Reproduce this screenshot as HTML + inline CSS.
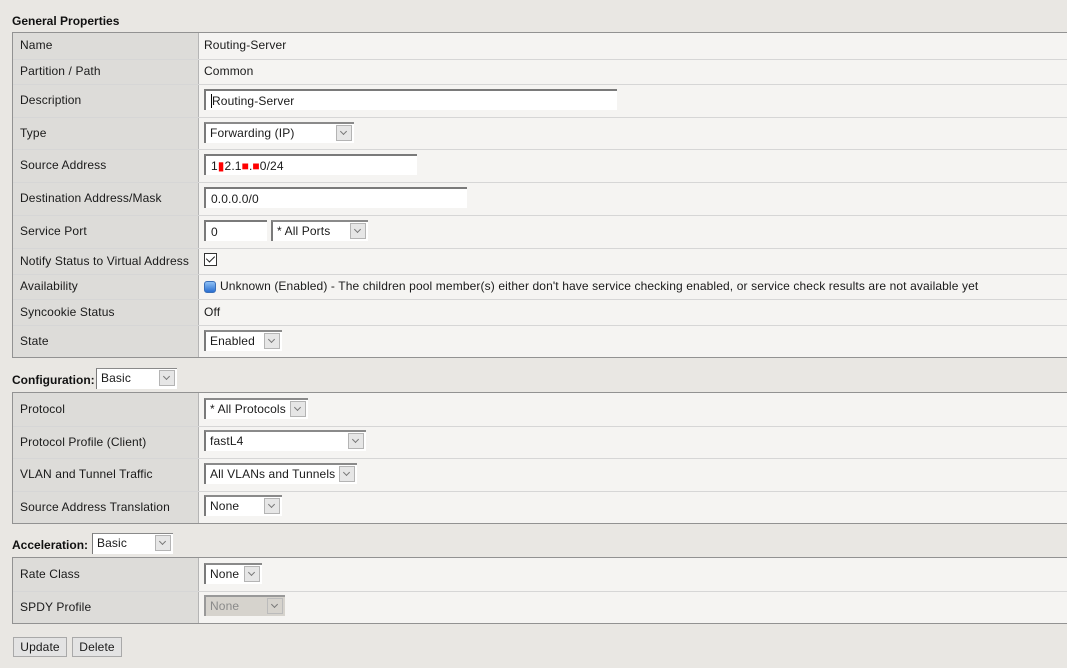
<!DOCTYPE html>
<html><head><meta charset="utf-8"><style>
*{box-sizing:border-box;margin:0;padding:0}
body{width:1067px;height:668px;background:#e9e7e3;font-family:"Liberation Sans",Arial,sans-serif;font-size:12px;letter-spacing:0.12px;color:#1a1a1a;position:relative;overflow:hidden}
.a{position:absolute}
.h{font-weight:bold;color:#111;letter-spacing:0}
.tbl{position:absolute;left:12px;width:1060px;border:1px solid #929292;border-right:none;background:#f5f4f2}
.row{position:relative;border-top:1px solid #d6d6d6}
.row:first-child{border-top:none}
.lab{position:absolute;left:0;top:0;bottom:0;width:186px;background:#dddcd9;border-right:1px solid #b5b5b5;padding-left:7px;padding-bottom:2px;display:flex;align-items:center}
.val{position:absolute;left:191px;top:0;bottom:0;padding-bottom:2px;display:flex;align-items:center}
.in{position:absolute;background:#fff;border-top:2px solid #7a7a7a;border-left:2px solid #7a7a7a;padding-left:5px;padding-top:1px;line-height:18px;height:21px;white-space:nowrap}
.sel{position:absolute;background:#fff;border-top:2px solid #8a8a8a;border-left:2px solid #7a7a7a;padding-left:4px;padding-top:1px;line-height:17px;height:21px;white-space:nowrap}
.arr{position:absolute;right:2px;top:1px;width:16px;height:16px;background:#e6e6e6;border:1px solid #b4b4b4}
.arr:after{content:"";position:absolute;left:4px;top:3px;width:4px;height:4px;border-right:1px solid #777;border-bottom:1px solid #777;transform:rotate(45deg)}
.btn{position:absolute;top:637px;height:20px;background:#e3e3e3;border:1px solid #a9a9a9;line-height:18px;text-align:center}
</style></head><body>
<div class="a h" style="left:12px;top:14px">General Properties</div>
<div class="tbl" style="top:32px">
 <div class="row" style="height:26px"><div class="lab">Name</div><div class="val">Routing-Server</div></div>
 <div class="row" style="height:25px"><div class="lab">Partition / Path</div><div class="val">Common</div></div>
 <div class="row" style="height:33px"><div class="lab">Description</div></div>
 <div class="row" style="height:32px"><div class="lab">Type</div></div>
 <div class="row" style="height:33px"><div class="lab">Source Address</div></div>
 <div class="row" style="height:33px"><div class="lab">Destination Address/Mask</div></div>
 <div class="row" style="height:33px"><div class="lab">Service Port</div></div>
 <div class="row" style="height:26px"><div class="lab">Notify Status to Virtual Address</div></div>
 <div class="row" style="height:25px"><div class="lab">Availability</div><div class="val" style="left:207px">Unknown (Enabled) - The children pool member(s) either don't have service checking enabled, or service check results are not available yet</div></div>
 <div class="row" style="height:26px"><div class="lab">Syncookie Status</div><div class="val">Off</div></div>
 <div class="row" style="height:32px"><div class="lab">State</div></div>
</div>
<div class="in" style="left:204px;top:89px;width:413px"><span style="border-left:1px solid #000">Routing-Server</span></div>
<div class="sel" style="left:204px;top:122px;width:150px">Forwarding (IP)<div class="arr"></div></div>
<div class="in" style="left:204px;top:154px;width:213px">1<span style="color:#f00">▮</span>2.1<span style="color:#f00">■</span>.<span style="color:#f00">■</span>0/24</div>
<div class="in" style="left:204px;top:187px;width:263px">0.0.0.0/0</div>
<div class="in" style="left:204px;top:220px;width:63px">0</div>
<div class="sel" style="left:271px;top:220px;width:97px">* All Ports<div class="arr"></div></div>
<div class="a" style="left:204px;top:253px;width:13px;height:13px;border:1px solid #333;background:#fff"><div style="position:absolute;left:3px;top:0px;width:5px;height:8px;border-right:1px solid #222;border-bottom:1px solid #222;transform:rotate(45deg)"></div></div>
<div class="a" style="left:204px;top:281px;width:12px;height:12px;border-radius:3px;background:linear-gradient(#8ec0f5,#2a6fd0);border:1px solid #3a6fb8"></div>
<div class="sel" style="left:204px;top:330px;width:78px">Enabled<div class="arr"></div></div>

<div class="a h" style="left:12px;top:373px">Configuration:</div>
<div class="sel" style="left:96px;top:368px;width:81px;border-top-width:1px;border-left-width:1px">Basic<div class="arr"></div></div>
<div class="tbl" style="top:392px">
 <div class="row" style="height:33px"><div class="lab">Protocol</div></div>
 <div class="row" style="height:32px"><div class="lab">Protocol Profile (Client)</div></div>
 <div class="row" style="height:33px"><div class="lab">VLAN and Tunnel Traffic</div></div>
 <div class="row" style="height:32px"><div class="lab">Source Address Translation</div></div>
</div>
<div class="sel" style="left:204px;top:398px;width:104px">* All Protocols<div class="arr"></div></div>
<div class="sel" style="left:204px;top:430px;width:162px">fastL4<div class="arr"></div></div>
<div class="sel" style="left:204px;top:463px;width:153px">All VLANs and Tunnels<div class="arr"></div></div>
<div class="sel" style="left:204px;top:495px;width:78px">None<div class="arr"></div></div>

<div class="a h" style="left:12px;top:538px">Acceleration:</div>
<div class="sel" style="left:92px;top:533px;width:81px;border-top-width:1px;border-left-width:1px">Basic<div class="arr"></div></div>
<div class="tbl" style="top:557px">
 <div class="row" style="height:33px"><div class="lab">Rate Class</div></div>
 <div class="row" style="height:32px"><div class="lab">SPDY Profile</div></div>
</div>
<div class="sel" style="left:204px;top:563px;width:58px">None<div class="arr"></div></div>
<div class="sel" style="left:204px;top:595px;width:81px;background:#d6d3cd;color:#8a8a8a;border-color:#999">None<div class="arr" style="background:#d6d3cd;border-color:#bbb"></div></div>

<div class="btn" style="left:13px;width:54px">Update</div>
<div class="btn" style="left:72px;width:50px">Delete</div>
</body></html>
